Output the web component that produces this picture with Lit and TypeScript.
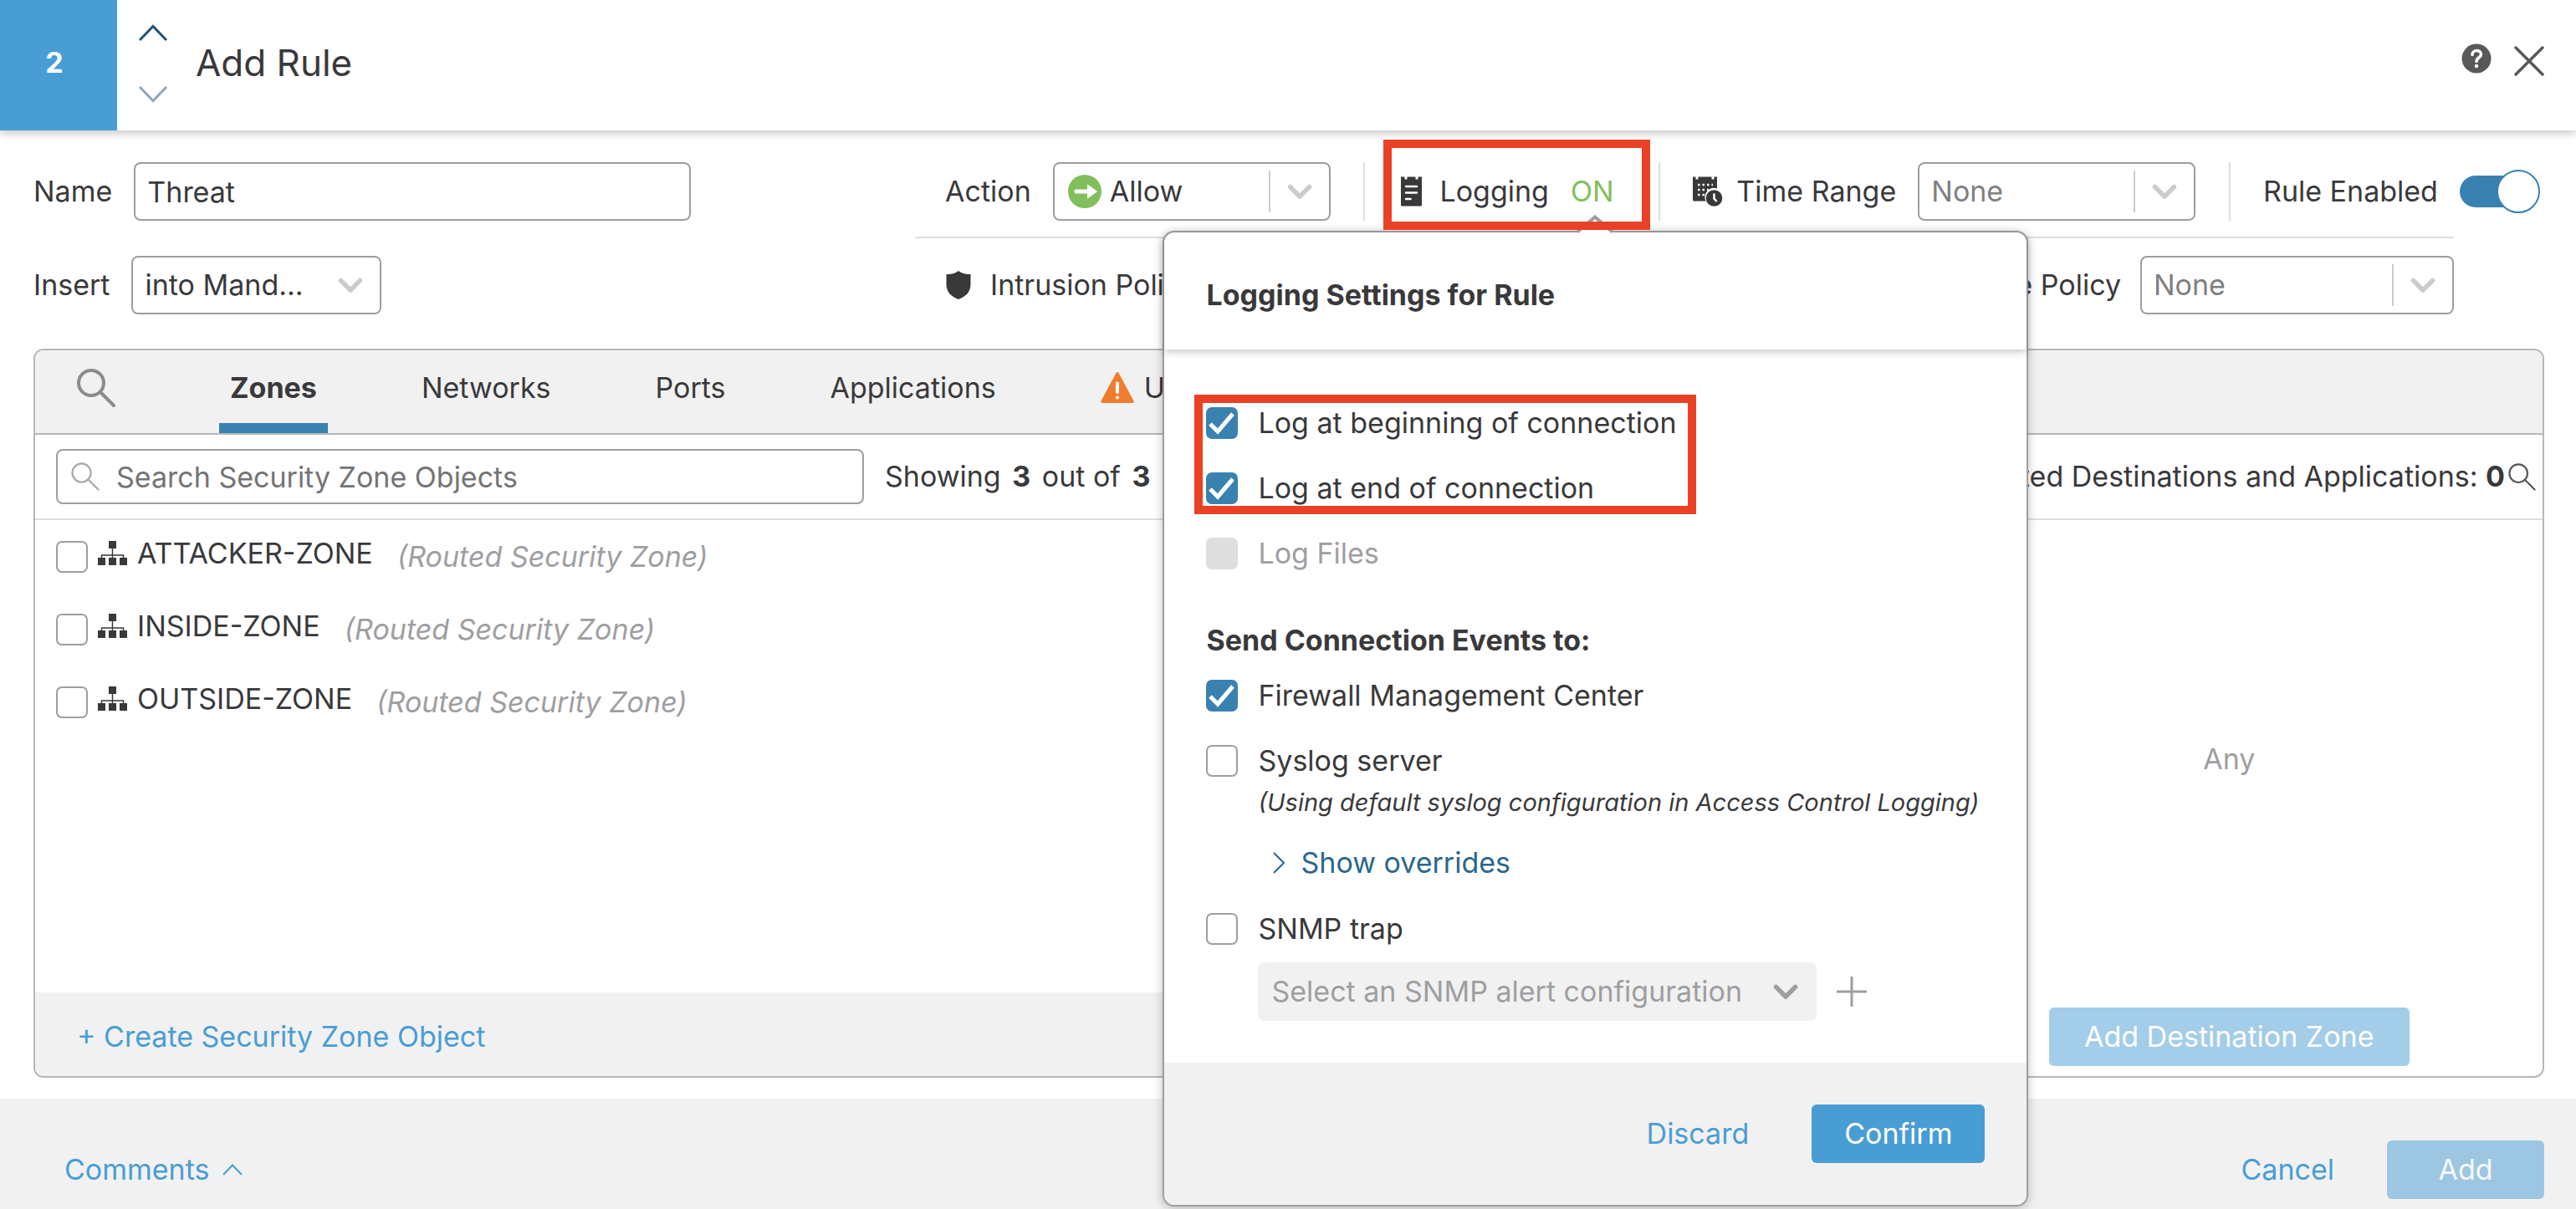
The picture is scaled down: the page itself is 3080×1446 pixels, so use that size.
import { LitElement, html, css, svg, nothing } from "lit";
import { customElement } from "lit/decorators.js";

const base = css`
  * {
    box-sizing: border-box;
  }
  h1,
  h2,
  h3,
  p,
  ul {
    margin: 0;
    padding: 0;
    font-size: inherit;
    font-weight: inherit;
  }
  svg {
    display: block;
    flex: none;
  }
  button,
  input,
  select {
    font: inherit;
    color: inherit;
    margin: 0;
    padding: 0;
    border: 0;
    background: none;
  }
  button {
    white-space: nowrap;
    cursor: pointer;
  }
  .link {
    color: #499dd5;
    text-decoration: none;
    white-space: nowrap;
  }
  .primary {
    height: 70px;
    border-radius: 6px;
    background: #499dd5;
    color: #fff;
  }
  .field {
    display: grid;
    align-items: center;
    height: 70px;
    border: 2px solid #9e9ea2;
    border-radius: 8px;
    background: #fff;
  }
  .field > * {
    grid-area: 1 / 1;
  }
  .field select,
  .field input {
    width: 100%;
    height: 66px;
    padding: 0 14px;
    appearance: none;
    outline: none;
  }
  .field .lead {
    margin-left: 16px;
    pointer-events: none;
  }
  .arrow {
    display: flex;
    align-items: center;
    justify-self: end;
    height: 50px;
    padding: 0 19px;
    color: #cbcbcc;
    pointer-events: none;
  }
  .arrow.split {
    border-left: 2px solid #cbcbcc;
  }
  .check {
    display: grid;
    flex: none;
  }
  .check > * {
    grid-area: 1 / 1;
  }
  .check input {
    width: 38px;
    height: 38px;
    border: 2px solid #9e9ea2;
    border-radius: 7px;
    background: #fff;
    appearance: none;
  }
  .check input:checked {
    border-color: #3982b0;
    background: #3982b0;
  }
  .check input:disabled {
    border-color: #dedede;
    background: #dedede;
  }
  .check svg {
    pointer-events: none;
  }
`;

const chevron = svg`<svg width="32" height="20" viewBox="0 0 32 20" fill="none" stroke="currentColor"
  stroke-width="5.500" stroke-linecap="round" stroke-linejoin="round"><path d="M4.500 4.500 L16 16 L27.500 4.500"/></svg>`;

const thinChevron = (w: number, h: number, d: string, stroke: string, sw = 2) => html`<svg
  width=${w}
  height=${h}
  fill="none"
  stroke=${stroke}
  stroke-width=${sw}
>
  <path d=${d} />
</svg>`;

const magnifier = (size: number, color: string, sw: number) => html`<svg
  width=${size}
  height=${size}
  viewBox="0 0 46 46"
  fill="none"
  stroke=${color}
  stroke-width=${sw}
  stroke-linecap="round"
>
  <circle cx="17" cy="17" r="15" />
  <path d="M28 28 L44 44" />
</svg>`;

const arrow = (split = true) => html`<span class="arrow ${split ? "split" : ""}">${chevron}</span>`;

const checkbox = (id: string, checked = false, disabled = false) => html`<span class="check">
  <input type="checkbox" id=${id} ?checked=${checked} ?disabled=${disabled} />
  ${checked
    ? html`<svg width="38" height="38" fill="none" stroke="#fff" stroke-width="5">
        <path d="M5 20 L14 29 L32 8" />
      </svg>`
    : nothing}
</span>`;

@customElement("logging-popover")
class LoggingPopover extends LitElement {
  static styles = [
    base,
    css`
      :host {
        display: block;
        border: 2px solid #9e9ea2;
        border-radius: 14px;
        background: #fff;
        box-shadow: 0 2px 12px rgba(0, 0, 0, 0.25);
      }
      .tip {
        position: absolute;
        top: -21px;
        left: 493px;
      }
      .head {
        padding: 55px 50px 45px;
        border-radius: 12px 12px 0 0;
        box-shadow: 0 3px 10px rgba(0, 0, 0, 0.22);
        font-weight: 700;
      }
      .body {
        padding: 68px 50px 50px;
      }
      .rows {
        display: flex;
        flex-direction: column;
        gap: 38px;
      }
      .row {
        display: flex;
        align-items: center;
        gap: 24px;
        height: 40px;
      }
      .muted {
        color: #9e9ea2;
      }
      .title {
        margin: 64px 0 26px;
        font-weight: 700;
      }
      .sub {
        margin-left: 62px;
      }
      .note {
        margin-top: 10px;
        font-size: 29px;
        font-style: italic;
        white-space: nowrap;
      }
      .overrides {
        display: flex;
        align-items: center;
        gap: 18px;
        margin: 32px 0 39px 80px;
        color: #2b678e;
        line-height: 40px;
      }
      .snmp {
        display: flex;
        align-items: center;
        gap: 24px;
        margin-top: 20px;
      }
      .snmp .field {
        width: 668px;
        border-color: #f1f1f1;
        background: #f1f1f1;
        color: #9e9ea2;
      }
      .snmp select:disabled {
        opacity: 1;
      }
      .snmp .arrow {
        color: #9e9ea2;
      }
      .foot {
        display: flex;
        justify-content: flex-end;
        align-items: center;
        gap: 75px;
        padding: 50px;
        border-radius: 0 0 12px 12px;
        background: #f1f1f1;
      }
      .foot .primary {
        padding: 0 39px;
      }
    `,
  ];

  render() {
    return html`
      <svg class="tip" width="44" height="24">
        <path d="M2 21 L22 2 L42 21 V24 H2 Z" fill="#fff" />
        <path d="M1 20.500 L22 2.500 L43 20.500" fill="none" stroke="#9e9ea2" stroke-width="4" />
      </svg>
      <h2 class="head">Logging Settings for Rule</h2>
      <div class="body">
        <div class="rows">
          <label class="row" for="begin">${checkbox("begin", true)} Log at beginning of connection</label>
          <label class="row" for="end">${checkbox("end", true)} Log at end of connection</label>
          <label class="row muted" for="files">${checkbox("files", false, true)} Log Files</label>
        </div>
        <h3 class="title">Send Connection Events to:</h3>
        <div class="rows">
          <label class="row" for="fmc">${checkbox("fmc", true)} Firewall Management Center</label>
          <label class="row" for="syslog">${checkbox("syslog")} Syslog server</label>
        </div>
        <p class="note sub">(Using default syslog configuration in Access Control Logging)</p>
        <button class="overrides">
          ${thinChevron(15, 26, "M1 1 L13 13 L1 25", "#2b678e")} Show overrides
        </button>
        <label class="row" for="snmp">${checkbox("snmp")} SNMP trap</label>
        <div class="snmp sub">
          <span class="field">
            <select disabled aria-label="SNMP alert configuration">
              <option>Select an SNMP alert configuration</option>
            </select>
            ${arrow(false)}
          </span>
          <button aria-label="Add SNMP alert">
            <svg width="36" height="36" stroke="#9e9ea2" stroke-width="3">
              <path d="M18 0 V36 M0 18 H36" />
            </svg>
          </button>
        </div>
      </div>
      <div class="foot">
        <button class="link">Discard</button>
        <button class="primary">Confirm</button>
      </div>
    `;
  }
}

@customElement("app-root")
class AppRoot extends LitElement {
  static styles = [
    base,
    css`
      :host {
        display: block;
        color: #39393b;
        background: #fff;
        font: 400 34px/40px Inter, "Liberation Sans", sans-serif;
      }
      .page {
        display: flex;
        flex-direction: column;
        min-height: 100vh;
      }
      .top {
        display: flex;
        align-items: stretch;
        height: 156px;
        box-shadow: 0 2px 12px rgba(0, 0, 0, 0.28);
      }
      .index {
        display: flex;
        align-items: center;
        justify-content: center;
        width: 140px;
        padding: 0 10px 6px 0;
        background: #499dd5;
        color: #fff;
        font-weight: 700;
      }
      .move {
        display: flex;
        flex-direction: column;
        justify-content: space-between;
        padding: 29px 34px 33px 26px;
      }
      .name {
        align-self: center;
        flex: 1;
        padding-bottom: 6px;
        font-size: 44px;
      }
      .tools {
        display: flex;
        align-items: center;
        gap: 27px;
        padding: 0 38px 11px 0;
      }
      .form {
        display: grid;
        grid-template-columns: 35% 1fr;
        padding: 38px 40px 41px 40px;
      }
      .left {
        display: flex;
        flex-direction: column;
        gap: 42px;
      }
      .item {
        display: flex;
        align-items: center;
        gap: 26px;
        height: 70px;
        white-space: nowrap;
      }
      .item.insert .field {
        width: 299px;
      }
      .name-field {
        width: 666px;
      }
      .w-332 {
        width: 332px;
      }
      .w-375 {
        width: 375px;
      }
      .dim {
        color: #7f7f80;
      }
      .allow select {
        padding-left: 66px;
      }
      .line {
        display: flex;
        justify-content: space-between;
        padding: 0 3px 0 40px;
      }
      .line.second {
        margin: 19px 106px 0 4px;
        padding: 21px 0 0 37px;
        border-top: 2px solid #dedede;
      }
      .line.second .item {
        gap: 23px;
      }
      .rule {
        width: 2px;
        height: 70px;
        background: #dedede;
      }
      .logging {
        position: relative;
        gap: 21px;
        padding: 0 14px 0 4px;
      }
      .logging .on {
        margin-left: 5px;
        color: #80bf5b;
      }
      .item .mark-gap {
        margin-right: -10px;
      }
      .highlight {
        position: absolute;
        z-index: 3;
        border: 10px solid #ea4126;
        pointer-events: none;
      }
      .mark-toggle {
        inset: -27px -29px -11px -17px;
      }
      .popover {
        position: absolute;
        z-index: 2;
        top: 82px;
        left: -281px;
        width: 1035px;
        white-space: normal;
      }
      .mark-events {
        top: 278px;
        left: -243px;
        width: 600px;
        height: 143px;
      }
      .switch {
        display: grid;
        align-items: center;
      }
      .switch > * {
        grid-area: 1 / 1;
      }
      .switch input {
        width: 96px;
        height: 52px;
        appearance: none;
      }
      .switch svg {
        pointer-events: none;
      }
      .panel {
        display: flex;
        flex: 1;
        flex-direction: column;
        margin: 0 38px 25px 40px;
        border: 2px solid #b7b7b7;
        border-radius: 12px;
        overflow: hidden;
      }
      .tabs {
        display: flex;
        gap: 99px;
        padding-left: 50px;
        border-bottom: 2px solid #b7b7b7;
        background: #f1f1f1;
      }
      .tabs .find {
        margin: 22px 25px 31px 0;
      }
      .tab {
        display: flex;
        align-items: center;
        gap: 12px;
        height: 99px;
        padding: 2px 13px 0;
        border-bottom: 12px solid transparent;
      }
      .tab.active {
        border-color: #3982b0;
        font-weight: 700;
      }
      .cols {
        display: grid;
        flex: 1;
        grid-template-columns: 2fr 1fr 1fr;
      }
      .col {
        display: flex;
        flex-direction: column;
      }
      .bar {
        display: flex;
        align-items: center;
        height: 102px;
        border-bottom: 2px solid #dedede;
        white-space: nowrap;
      }
      .bar.search {
        gap: 25px;
        padding-left: 25px;
      }
      .bar.search .field {
        width: 966px;
        height: 66px;
      }
      .bar.search .field input {
        height: 62px;
        padding-left: 70px;
      }
      .bar input::placeholder {
        color: #747475;
        opacity: 1;
      }
      .bar.search b {
        margin: 0 4px;
      }
      .bar.chosen {
        justify-content: flex-end;
        gap: 4px;
        padding-right: 8px;
      }
      .zones {
        flex: 1;
        list-style: none;
      }
      .zone {
        display: flex;
        align-items: center;
        height: 87px;
        padding-left: 25px;
        white-space: nowrap;
      }
      .zone label {
        display: flex;
        align-items: center;
        gap: 12px;
        margin: 0 29px 8px 12px;
      }
      .zone em {
        color: #9e9ea2;
      }
      .create {
        padding: 33px 50px 27px;
        background: #f1f1f1;
      }
      .any {
        display: flex;
        flex: 1;
        align-items: center;
        justify-content: center;
        padding-bottom: 12px;
        color: #9e9ea2;
      }
      .action {
        display: flex;
        justify-content: center;
        padding-bottom: 12px;
      }
      .action .primary {
        padding: 0 42px;
        opacity: 0.5;
      }
      .bottom {
        display: flex;
        align-items: center;
        padding: 50px 38px 12px 77px;
        background: #f1f1f1;
      }
      .comments {
        display: flex;
        align-items: center;
        gap: 16px;
        margin-right: auto;
      }
      .bottom .primary {
        width: 188px;
        margin-left: 63px;
        opacity: 0.5;
      }
    `,
  ];

  private readonly zones = ["ATTACKER-ZONE", "INSIDE-ZONE", "OUTSIDE-ZONE"];

  private zoneRow(name: string) {
    return html`<li class="zone">
      ${checkbox(name)}
      <label for=${name}>
        <svg width="35" height="29" fill="#39393b">
          <path d="M13 0h9v9h-9z M0 20h9v9H0z M13 20h9v9h-9z M26 20h9v9h-9z" />
          <path d="M17.500 9v11 M4.500 20v-3h26v3" fill="none" stroke="#39393b" stroke-width="1.500" />
        </svg>
        ${name}
      </label>
      <em>(Routed Security Zone)</em>
    </li>`;
  }

  render() {
    return html`<div class="page">
      <header class="top">
        <div class="index">2</div>
        <div class="move">
          <button aria-label="Previous rule">
            ${thinChevron(34, 20, "M1 19 L17 2.500 L33 19", "#1f5274", 3)}
          </button>
          <button aria-label="Next rule">
            ${thinChevron(34, 20, "M1 1 L17 17.500 L33 1", "#8fa8b9", 3)}
          </button>
        </div>
        <h1 class="name">Add Rule</h1>
        <div class="tools">
          <button aria-label="Help">
            <svg width="36" height="42" fill="none" stroke="#fff" stroke-width="3.500" stroke-linecap="round">
              <circle cx="18" cy="18" r="17.500" fill="#58585b" stroke="none" />
              <path d="M13 13.500 C13 7 23.500 7 23.500 13 C23.500 17 18 16.500 18 21.500" />
              <circle cx="18" cy="27" r="2.200" fill="#fff" stroke="none" />
            </svg>
          </button>
          <button aria-label="Close">
            <svg width="36" height="36" stroke="#58585b" stroke-width="3.500" stroke-linecap="round">
              <path d="M2 2 L34 34 M34 2 L2 34" />
            </svg>
          </button>
        </div>
      </header>

      <section class="form">
        <div class="left">
          <div class="item">
            <label for="name">Name</label>
            <span class="field name-field"><input id="name" type="text" value="Threat" /></span>
          </div>
          <div class="item insert">
            <label for="insert">Insert</label>
            <span class="field">
              <select id="insert"><option>into Mand...</option></select>
              ${arrow(false)}
            </span>
          </div>
        </div>

        <div class="right">
          <div class="line">
            <div class="item">
              <label for="action">Action</label>
              <span class="field w-332 allow">
                <select id="action"><option>Allow</option></select>
                <svg class="lead" width="40" height="40">
                  <circle cx="20" cy="20" r="20" fill="#80bf5b" />
                  <path
                    d="M8.500 18h15v-6l11 8l-11 8v-6h-15q-1.500 -2 0 -4z"
                    fill="#fff"
                    stroke="#fff"
                    stroke-width="1"
                    stroke-linejoin="round"
                  />
                </svg>
                ${arrow()}
              </span>
            </div>
            <div class="rule"></div>
            <div class="item logging">
              <svg width="25" height="36" fill="#39393b">
                <path
                  d="M0 0.500H4.500V3.500H7.500V0.500H17.500V3.500H20.500V0.500H25V34Q25 35.500 23.500 35.500H1.500Q0 35.500 0 34Z"
                />
                <path
                  d="M6 12H19 M6 19.500H19 M6 27H11.500"
                  stroke="#fff"
                  stroke-width="2.500"
                  stroke-linecap="round"
                />
              </svg>
              <span>Logging</span>
              <span class="on">ON</span>
              <span class="highlight mark-toggle"></span>
              <logging-popover class="popover"></logging-popover>
              <span class="highlight mark-events"></span>
            </div>
            <div class="rule"></div>
            <div class="item">
              <svg class="mark-gap" width="36" height="36" fill="#39393b">
                <path
                  d="M0 0.500H3.500V3.500H6.500V0.500H22.500V3.500H25.500V0.500H29V14.500A11 11 0 0 0 15.500 29.500H1.500Q0 29.500 0 28Z"
                />
                <path
                  d="M6 10H24 M6 16H19 M6 22H14"
                  stroke="#fff"
                  stroke-width="2.500"
                  stroke-dasharray="2.500 3"
                />
                <circle cx="25.500" cy="26" r="9.800" />
                <path d="M25.500 20.500V26.500L28.500 30" fill="none" stroke="#fff" stroke-width="2.500" />
              </svg>
              <label for="range">Time Range</label>
              <span class="field w-332 dim">
                <select id="range"><option>None</option></select>
                ${arrow()}
              </span>
            </div>
            <div class="rule"></div>
            <div class="item">
              <label for="enabled">Rule Enabled</label>
              <span class="switch">
                <input type="checkbox" role="switch" id="enabled" checked />
                <svg width="96" height="52">
                  <rect x="0" y="7" width="70" height="38" rx="19" fill="#3982b0" />
                  <circle cx="70" cy="26" r="25" fill="#fff" stroke="#3982b0" stroke-width="2" />
                </svg>
              </span>
            </div>
          </div>

          <div class="line second">
            <div class="item">
              <svg width="30" height="34" fill="#39393b">
                <path d="M15 0 C19 3 24 4.500 29.500 4 V16 C29.500 26 23 31 15 34 C7 31 0.500 26 0.500 16 V4 C6 4.500 11 3 15 0Z" />
              </svg>
              <span>Intrusion Policy</span>
            </div>
            <div class="item">
              <label for="file">File Policy</label>
              <span class="field w-375 dim">
                <select id="file"><option>None</option></select>
                ${arrow()}
              </span>
            </div>
          </div>
        </div>
      </section>

      <section class="panel">
        <nav class="tabs">
          <button class="find" aria-label="Search">${magnifier(46, "#8b8b8c", 4)}</button>
          <button class="tab active">Zones</button>
          <button class="tab">Networks</button>
          <button class="tab">Ports</button>
          <button class="tab">Applications</button>
          <button class="tab">
            <svg width="40" height="37" fill="#f07d2e">
              <path d="M20 0 Q21 0 21.500 1 L39.500 34.500 Q40 37 38 37 H2 Q0 37 0.500 34.500 L18.500 1 Q19 0 20 0Z" />
              <path d="M20 13.500V24" stroke="#fff" stroke-width="4" stroke-linecap="round" />
              <circle cx="20" cy="30.500" r="2" fill="#fff" />
            </svg>
            URLs
          </button>
        </nav>
        <div class="cols">
          <div class="col">
            <div class="bar search">
              <label class="field">
                <input type="search" placeholder="Search Security Zone Objects" aria-label="Search zones" />
                <span class="lead">${magnifier(34, "#a8a8a9", 3)}</span>
              </label>
              <span>Showing <b>3</b> out of <b>3</b></span>
            </div>
            <ul class="zones">
              ${this.zones.map((z) => this.zoneRow(z))}
            </ul>
            <div class="create"><a class="link" href="#create">+ Create Security Zone Object</a></div>
          </div>
          <div class="col">
            <div class="bar"></div>
          </div>
          <div class="col">
            <div class="bar chosen">
              <span>Selected Destinations and Applications: <b>0</b></span>
              <button aria-label="Search selected">${magnifier(33, "#58585b", 3)}</button>
            </div>
            <div class="any">Any</div>
            <div class="action"><button class="primary">Add Destination Zone</button></div>
          </div>
        </div>
      </section>

      <footer class="bottom">
        <button class="comments link">
          Comments ${thinChevron(24, 14, "M1 13 L12 1.500 L23 13", "#499dd5")}
        </button>
        <button class="link">Cancel</button>
        <button class="primary">Add</button>
      </footer>
    </div>`;
  }
}
